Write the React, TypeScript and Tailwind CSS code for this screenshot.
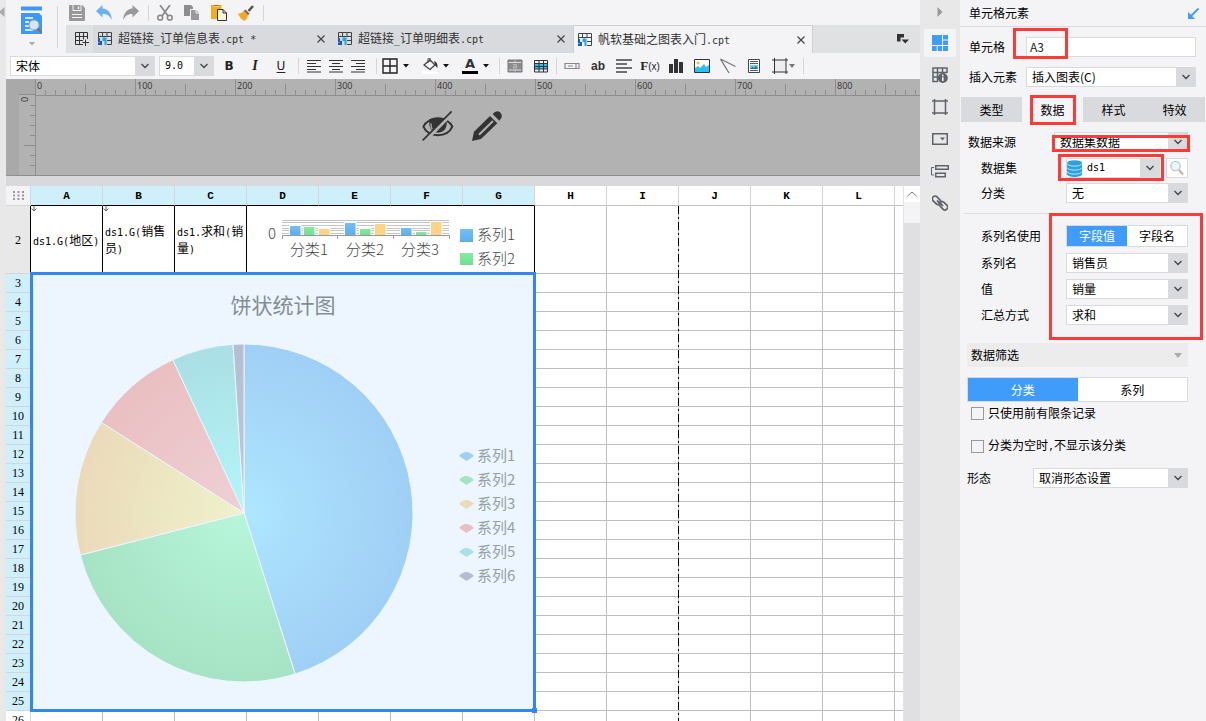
import { Fragment, type ReactNode } from "react";

const COLUMNS = ["A", "B", "C", "D", "E", "F", "G", "H", "I", "J", "K", "L", ""];
const SELECTED_COLUMNS = 7;
const FIRST_ROW = 3;
const LAST_SELECTED_ROW = 25;
const ROWS = Array.from({ length: 24 }, (_, i) => FIRST_ROW + i);

const ascii = "text-[10px] font-['DejaVu_Sans_Mono',monospace]";

/* Latin runs are set in a half-width face so that they line up with the ideographs. */
function Mixed({ text }: { text: string }) {
  return (
    <>
      {text.split(/([\x20-\x7e]+)/).map((run, i) =>
        i % 2 ? (
          <span key={i} className="font-['DejaVu_Sans_Mono',monospace] text-[10px]">
            {run}
          </span>
        ) : (
          <Fragment key={i}>{run}</Fragment>
        ),
      )}
    </>
  );
}

function Icon({ children, box = "0 0 16 16", className = "size-4" }: { children: ReactNode; box?: string; className?: string }) {
  return (
    <svg viewBox={box} className={`block shrink-0 ${className}`} fill="none" aria-hidden="true">
      {children}
    </svg>
  );
}

function Chevron({ className = "w-[19px]" }: { className?: string }) {
  return (
    <span className={`pointer-events-none absolute inset-y-0 right-0 flex items-center justify-center bg-[#d9dadd] ${className}`}>
      <Icon box="0 0 8 6" className="h-[6px] w-2">
        <path d="M0.5 1 L4 4.5 L7.5 1" stroke="#444" strokeWidth="1.3" />
      </Icon>
    </span>
  );
}

function Select({ id, label, value, className = "", mono = false, icon }: { id: string; label?: string; value: string; className?: string; mono?: boolean; icon?: ReactNode }) {
  return (
    <div className={`relative flex h-5 items-center border border-[#d9dadd] bg-white ${className}`}>
      {icon}
      <select id={id} aria-label={label} className={`h-full w-full appearance-none bg-transparent pl-[5px] text-black outline-none ${mono ? ascii : ""}`}>
        <option>{value}</option>
      </select>
      <Chevron />
    </div>
  );
}

function Caret() {
  return (
    <Icon box="0 0 6 4" className="h-1 w-[6px]">
      <path d="M0 0 H6 L3 3.5 Z" fill="#111" />
    </Icon>
  );
}

function Divider({ className }: { className: string }) {
  return <span className={`w-px shrink-0 bg-[#d4d5d8] ${className}`} />;
}

function Tool({ label, width = "w-[26px]", children }: { label: string; width?: string; children: ReactNode }) {
  return (
    <button aria-label={label} className={`flex h-5 shrink-0 items-center justify-center ${width}`}>
      {children}
    </button>
  );
}

function DropTool({ label, children }: { label: string; children: ReactNode }) {
  return (
    <button aria-label={label} className="flex h-5 w-10 shrink-0 items-center pl-[5px]">
      {children}
      <span className="flex w-4 justify-center">
        <Caret />
      </span>
    </button>
  );
}

function QuickBar() {
  return (
    <div className="flex h-[25px] items-center pl-[3px]">
      <div className="flex gap-[11px]">
        <button aria-label="保存">
          <Icon>
            <path d="M0 1 Q0 0 1 0 H13 L16 3 V15 Q16 16 15 16 H1 Q0 16 0 15 Z" fill="#999" />
            <path d="M4 0 V5.500 H12 V0" stroke="#f4f4f7" />
            <path d="M9.500 1.500 V4" stroke="#f4f4f7" strokeWidth="1.500" />
            <path d="M3 9.500 H13 M3 12.500 H13" stroke="#f4f4f7" />
          </Icon>
        </button>
        <button aria-label="撤销">
          <Icon>
            <path d="M0 6 L6.500 0 V3.500 C12 4 15.500 8 15.800 15 C13.500 10.500 11 9 6.500 9 V12.500 Z" fill="#6cb0f2" />
          </Icon>
        </button>
        <button aria-label="重做">
          <Icon>
            <path d="M16 6 L9.500 0 V3.500 C4 4 0.500 8 0.200 15 C2.500 10.500 5 9 9.500 9 V12.500 Z" fill="#999" />
          </Icon>
        </button>
      </div>
      <Divider className="mr-2 ml-[9px] h-4" />
      <div className="flex gap-[11px]">
        <button aria-label="剪切">
          <Icon>
            <path d="M3 0 L11 11 M13 0 L5 11" stroke="#888" strokeWidth="1.700" />
            <circle cx="3.200" cy="12.700" r="2.400" stroke="#888" strokeWidth="1.500" />
            <circle cx="12.800" cy="12.700" r="2.400" stroke="#888" strokeWidth="1.500" />
          </Icon>
        </button>
        <button aria-label="复制">
          <Icon>
            <path d="M0 0 H7 L9 2 V11 H0 Z" fill="#8d8d8d" />
            <path d="M6.500 4.500 H12 L15.500 8 V15.500 H6.500 Z" fill="#999" stroke="#f4f4f7" />
            <path d="M12 4.500 V8 H15.500" stroke="#f4f4f7" />
          </Icon>
        </button>
        <button aria-label="粘贴">
          <Icon>
            <path d="M0 0 H3 V1.500 H8 V0 H10.500 V14 H0 Z" fill="#f6ab1c" />
            <path d="M3 0 H8 V1 H3 Z" fill="#b36b00" />
            <path d="M6.500 4.500 H12 L15.500 8 V15.500 H6.500 Z" fill="#fff6dc" stroke="#333" />
            <path d="M12 4.500 V8 H15.500" stroke="#333" />
          </Icon>
        </button>
        <button aria-label="格式刷">
          <Icon>
            <path d="M15 1 L10.500 6" stroke="#555" strokeWidth="2.600" />
            <path d="M7.500 4.500 L11.500 8.500 L10 10.500 L5.500 6 Z" fill="#8b6b55" />
            <path d="M0 8.500 Q3 9 5.500 6 L10 10.500 Q9 14 6.500 16 Q2 14 0 8.500 Z" fill="#f7a823" />
          </Icon>
        </button>
      </div>
      <Divider className="ml-[9px] h-4" />
    </div>
  );
}

function FileIcon() {
  return (
    <Icon box="0 0 14 14" className="size-[14px]">
      <path d="M0.500 4 V0.500 H13.500 V12.500 H9 M0.500 4.500 H13.500 M9 8.500 H13.500 M4.500 0.500 V5 M9 0.500 V5 M0.500 4 V6" stroke="#444" />
      <path d="M4.500 5.500 H8.500 V13 H6.500 V9 H4.500 Z" fill="#2aa3e0" />
      <path d="M0 6 H2 V9 H4 V13 H0 V11 H2 V10.500 H0 Z" fill="#0f5fb4" />
    </Icon>
  );
}

function FileTab({ name, active = false }: { name: string; active?: boolean }) {
  return (
    <div role="tab" aria-selected={active} className={`flex w-60 items-center ${active ? "border-x border-t border-[#cfd0d3] bg-[#f4f4f7] pr-[7px] pl-1" : "bg-[#d9dadd] pr-2 pl-[5px]"}`}>
      <FileIcon />
      <span className="ml-[6px] flex-1 whitespace-pre text-[#333]">
        <Mixed text={name} />
      </span>
      <button aria-label="关闭">
        <Icon box="0 0 8 8" className="size-2">
          <path d="M0.500 0.500 L7.500 7.500 M7.500 0.500 L0.500 7.500" stroke="#444" strokeWidth="1.200" />
        </Icon>
      </button>
    </div>
  );
}

function FileTabs() {
  return (
    <div role="tablist" className="flex h-7 bg-[#e0e1e3]">
      <button aria-label="新建" className="flex w-[27px] items-center justify-center pl-1">
        <Icon box="0 0 14 14" className="size-[14px]">
          <path d="M8 12.500 H0.500 V0.500 H12.500 V7 M0.500 4.500 H12.500 M0.500 8.500 H8 M4.500 0.500 V12.500 M8.500 0.500 V7.500 M10.500 7.500 V14 M7.500 10.500 H14" stroke="#333" />
        </Icon>
      </button>
      <FileTab name="超链接_订单信息表.cpt *" />
      <FileTab name="超链接_订单明细表.cpt" />
      <FileTab name="帆软基础之图表入门.cpt" active />
      <button aria-label="更多" className="mr-[11px] ml-auto">
        <Icon box="0 0 12 10" className="h-[10px] w-3">
          <path d="M0 0 H7 V3.500 H3.500 V7.500 H0 Z" fill="#333" />
          <path d="M4.500 5.500 H12 L8.250 9.500 Z" fill="#333" />
        </Icon>
      </button>
    </div>
  );
}

function FormatBar() {
  return (
    <div className="flex h-[26px] shrink-0 items-center overflow-hidden bg-[#f4f4f7] pl-1">
      <Select id="font" label="字体" value="宋体" className="w-[145px] shrink-0" />
      <Select id="size" label="字号" value="9.0" className="mr-[2px] ml-1 w-[55px] shrink-0" mono />
      <Tool label="加粗">
        <b className="font-['DejaVu_Sans'] text-xs text-[#222]">B</b>
      </Tool>
      <Tool label="斜体">
        <b className="font-['Liberation_Serif'] text-sm text-[#222] italic">I</b>
      </Tool>
      <Tool label="下划线">
        <span className="font-['DejaVu_Sans'] text-xs text-[#222] underline underline-offset-2">U</span>
      </Tool>
      <Divider className="mx-1 h-4" />
      <Tool label="左对齐" width="w-[22px]">
        <Icon>
          <path d="M1 2.500 H15 M1 5.500 H10 M1 8.500 H15 M1 11.500 H10 M1 14 H15" stroke="#333" strokeWidth="1.200" />
        </Icon>
      </Tool>
      <Tool label="居中" width="w-[22px]">
        <Icon>
          <path d="M1 2.500 H15 M4 5.500 H12 M1 8.500 H15 M4 11.500 H12 M1 14 H15" stroke="#333" strokeWidth="1.200" />
        </Icon>
      </Tool>
      <Tool label="右对齐" width="w-[22px]">
        <Icon>
          <path d="M1 2.500 H15 M6 5.500 H15 M1 8.500 H15 M6 11.500 H15 M1 14 H15" stroke="#333" strokeWidth="1.200" />
        </Icon>
      </Tool>
      <Divider className="ml-[7px] h-4" />
      <DropTool label="边框">
        <Icon>
          <path d="M1 1 H15 V15 H1 Z M8 1 V15 M1 8 H15" stroke="#222" strokeWidth="1.400" />
        </Icon>
      </DropTool>
      <DropTool label="填充">
        <Icon>
          <path d="M2 7 L8 2 L13 7 L8 11.500 Z" stroke="#444" strokeWidth="1.300" />
          <path d="M6 5 V1 Q6 0 7 0 H8 V4" stroke="#444" />
          <path d="M12 3 Q16 4 15.500 10 L13.500 8 Z" fill="#333" />
          <path d="M0 13 H16 V16 H0 Z" fill="#fff" />
        </Icon>
      </DropTool>
      <DropTool label="字体颜色">
        <span className="flex w-4 flex-col items-center">
          <b className="font-['DejaVu_Sans'] text-[13px] leading-3 text-[#333]">A</b>
          <span className="mt-px h-[3px] w-full bg-black" />
        </span>
      </DropTool>
      <Divider className="mx-[2px] h-4" />
      <Tool label="合并单元格">
        <Icon>
          <path d="M1 2 H15 V14 H1 Z" fill="#8c8c8c" />
          <path d="M1.500 4.500 H14.500 M1.500 12 H14.500 M8 2 V4 M8 12 V14" stroke="#ddd" />
          <path d="M1 2 H15 V14 H1 Z" stroke="#777" />
          <path d="M6 6.500 H9.500 V10 H6.500 V8.300 H9.500" stroke="#bbb" />
        </Icon>
      </Tool>
      <Tool label="拆分单元格">
        <Icon>
          <path d="M1 5 H15 V11 H1 Z" fill="#39bdf5" />
          <path d="M1.500 2.500 H14.500 V14 H1.500 Z M1 5.500 H15 M1 8.500 H15 M1 11 H15 M6 2 V14 M10.500 2 V14" stroke="#333" />
        </Icon>
      </Tool>
      <Divider className="mx-[2px] h-4" />
      <Tool label="控件">
        <Icon>
          <path d="M1 5.500 H15 V10.500 H1 Z M4 8 H9 M12 6 V10" stroke="#888" strokeWidth="1.200" />
        </Icon>
      </Tool>
      <Tool label="文本">
        <b className="font-['Liberation_Sans'] text-xs text-[#333]">ab</b>
      </Tool>
      <Tool label="富文本">
        <Icon>
          <path d="M0 2 H16 M0 6 H11 M0 10 H16 M0 14 H11" stroke="#444" strokeWidth="1.500" />
        </Icon>
      </Tool>
      <Tool label="公式">
        <b className="font-['Liberation_Serif'] text-[13px] text-[#222]">
          F<span className="font-['Liberation_Sans'] text-[10px] font-normal">(x)</span>
        </b>
      </Tool>
      <Tool label="图表">
        <Icon>
          <path d="M1 6 H5 V15 H1 Z M6 1 H10 V15 H6 Z M11 4 H15 V15 H11 Z" fill="#333" />
        </Icon>
      </Tool>
      <Tool label="图片">
        <Icon>
          <path d="M0.500 1.500 H15.500 V14.500 H0.500 Z" fill="#fff" stroke="#333" />
          <circle cx="4" cy="5" r="1.500" fill="#ffb636" />
          <path d="M1 14 V10 L4 8 L6 10 L10 6 L12 9 L15 7 V14 Z" fill="#33bdf2" />
        </Icon>
      </Tool>
      <Tool label="斜线">
        <Icon>
          <path d="M0.500 1 L15.500 8.500 M0.500 1 L9 15" stroke="#777" strokeWidth="1.300" />
        </Icon>
      </Tool>
      <Tool label="子报表">
        <Icon>
          <path d="M2.500 1.500 H13.500 V14.500 H2.500 Z" fill="#fff" stroke="#444" />
          <path d="M4 3.500 H12 M4 5.500 H12 M4 12.500 H12" stroke="#555" />
          <path d="M4 7 H12 V11 H4 Z" fill="#69c4f4" />
          <path d="M4 11 L6.500 9 L8 10 L10 8 L12 11 Z" fill="#1b6fb8" />
        </Icon>
      </Tool>
      <button aria-label="悬浮元素" className="flex h-5 shrink-0 items-center pl-[5px]">
        <Icon>
          <path d="M2 2 H14 V14 H2 Z" fill="#eee" />
          <path d="M2.500 0 V16 M14 0 V16 M0 2 H16 M0 14 H16" stroke="#333" />
        </Icon>
        <Icon box="0 0 6 4" className="ml-px h-1 w-[6px]">
          <path d="M0 0 H6 L3 4 Z" fill="#777" />
        </Icon>
      </button>
      <Divider className="mx-2 h-4" />
    </div>
  );
}

function Ribbon() {
  return (
    <header className="flex h-[53px] shrink-0 bg-[#f4f4f7]">
      <div className="flex w-[60px] shrink-0 items-start pt-[6px]">
        <button aria-label="预览" className="flex w-[51px] flex-col items-center">
          <Icon box="0 0 21 28" className="h-7 w-[21px]">
            <path d="M0 0.500 H21 V4.500 H0 Z M0 7 H18 L21 10 V28 H0 Z" fill="#3d98f8" />
            <path d="M4 12 H12 M4 16 H8 M4 20 H8 M4 24 H12" stroke="#fff" strokeWidth="1.500" />
            <circle cx="13" cy="19" r="5" fill="#d5e6f5" stroke="#9aa5b2" />
            <path d="M16.500 22.500 L20.500 26.500" stroke="#8b6f52" strokeWidth="2.200" />
          </Icon>
          <Icon box="0 0 6 4" className="mt-2 h-1 w-[6px]">
            <path d="M0 0 H6 L3 3.500 Z" fill="#aaa" />
          </Icon>
        </button>
        <Divider className="h-[42px]" />
      </div>
      <div className="min-w-0 flex-1">
        <QuickBar />
        <FileTabs />
      </div>
    </header>
  );
}

function Ruler() {
  return (
    <div className="relative flex h-[17px] overflow-hidden border-b border-[#8e8e8e]">
      <svg className="absolute inset-0 h-full w-full" aria-hidden="true">
        <defs>
          <pattern id="ticks" width="100" height="17" patternUnits="userSpaceOnUse">
            <path d="M0.500 0 V17 M50.500 5 V17 M10.500 11 V17 M20.500 11 V17 M30.500 11 V17 M40.500 11 V17 M60.500 11 V17 M70.500 11 V17 M80.500 11 V17 M90.500 11 V17" stroke="#8e8e8e" />
          </pattern>
        </defs>
        <rect width="100%" height="100%" fill="url(#ticks)" />
      </svg>
      {[0, 100, 200, 300, 400, 500, 600, 700, 800].map((n) => (
        <span key={n} className="w-[100px] shrink-0 pl-[2px] font-['Open_Sans',sans-serif] text-[9px] leading-[13px] font-medium text-[#333]">
          {n}
        </span>
      ))}
    </div>
  );
}

function PreviewPane() {
  return (
    <div className="flex h-[97px] shrink-0 border-b border-[#8e8e8e] bg-[#b2b2b2]">
      <div className="w-[13px] shrink-0 bg-[#a9a9a9]" />
      <div className="flex w-4 shrink-0 flex-col">
        <div className="h-4 border-b border-[#8e8e8e] bg-[#a9a9a9]" />
        <svg viewBox="0 0 16 80" className="h-20 w-4 overflow-visible" aria-hidden="true">
          <path d="M11 10.500 H16 M11 20.500 H16 M11 30.500 H16 M11 40.500 H16 M5 50.500 H16 M11 60.500 H16 M11 70.500 H16" stroke="#8e8e8e" />
          <text x="-7" y="9" transform="rotate(-90)" fontSize="9" fontWeight="500" fontFamily="Open Sans" fill="#333">
            0
          </text>
        </svg>
      </div>
      <div className="flex min-w-0 flex-1 flex-col">
        <Ruler />
        <div className="flex flex-1 items-start justify-center gap-4 border-l border-[#8e8e8e] pt-[14px] pr-8">
          <button aria-label="隐藏">
            <Icon box="34 42 100 96" className="h-8 w-[34px]">
              <path d="M40 92 C56 60 112 60 127 92 C112 126 56 126 40 92 Z" stroke="#333" strokeWidth="6" />
              <path d="M58 70 Q84 58 110 70 Q114 108 84 110 Q54 108 58 70 Z" fill="#333" />
              <path d="M63 82 Q62 94 67 100" stroke="#b2b2b2" strokeWidth="4" />
              <path d="M130 48 L45 135" stroke="#b2b2b2" strokeWidth="10" />
              <path d="M125 46 L38 133" stroke="#333" strokeWidth="5" />
            </Icon>
          </button>
          <button aria-label="编辑">
            <Icon box="186 42 96 96" className="size-8">
              <path d="M243 60 L265 82 L216 129 L189 135 L195 107 Z" fill="#333" />
              <path d="M251 54 Q262 40 273 49 Q285 60 271 74 Z" fill="#333" />
              <path d="M210 116 L252 75" stroke="#b2b2b2" strokeWidth="6" />
            </Icon>
          </button>
        </div>
      </div>
    </div>
  );
}

const BARS = [
  { x: 290, y: 225, fill: "url(#barBlue)" },
  { x: 304, y: 226, fill: "url(#barGreen)" },
  { x: 319, y: 228, fill: "#fdd485" },
  { x: 345, y: 222, fill: "url(#barBlue)" },
  { x: 360, y: 228, fill: "url(#barGreen)" },
  { x: 375, y: 223, fill: "#fdd485" },
  { x: 401, y: 227, fill: "url(#barBlue)" },
  { x: 416, y: 231, fill: "url(#barGreen)" },
  { x: 431, y: 221, fill: "#fdd485" },
];

function BarChart() {
  return (
    <svg viewBox="247 206 287 67" className="block h-[67px] w-[287px]" fontFamily="Noto Sans CJK SC, sans-serif" fontWeight="300" fontSize="15" fill="#444">
      <defs>
        <linearGradient id="barBlue" x2="0" y2="1">
          <stop stopColor="#6fc0fb" />
          <stop offset="1" stopColor="#5fadec" />
        </linearGradient>
        <linearGradient id="barGreen" x2="0" y2="1">
          <stop stopColor="#84eda0" />
          <stop offset="1" stopColor="#74dc92" />
        </linearGradient>
      </defs>
      <path d="M282 219.500 H449 M282 221.500 H449 M282 224.500 H449 M282 227.500 H449 M282 229.500 H449 M282 232.500 H449" fill="none" stroke="#c4c4c4" />
      {BARS.map((b) => (
        <rect key={b.x} x={b.x - 0.5} y={b.y - 0.5} width="11.500" height={235 - b.y} fill={b.fill} stroke="#fff" />
      ))}
      <path d="M282.500 238 V234.500 H449.500 V238 M337.500 234 V238 M393.500 234 V238" fill="none" stroke="#999" />
      <text x="268" y="238">0</text>
      <text x="309" y="254" textAnchor="middle">分类1</text>
      <text x="365" y="254" textAnchor="middle">分类2</text>
      <text x="420" y="254" textAnchor="middle">分类3</text>
      <rect x="460" y="228" width="13" height="13" fill="url(#barBlue)" />
      <text x="477" y="239">系列1</text>
      <rect x="460" y="252" width="13" height="12" fill="url(#barGreen)" />
      <text x="477" y="263">系列2</text>
    </svg>
  );
}

const SLICES = [
  { name: "系列1", from: 0, to: 162.4, edge: "#a0cff5", core: "#aee6ff" },
  { name: "系列2", from: 162.4, to: 255.6, edge: "#a6e3c5", core: "#b8f6da" },
  { name: "系列3", from: 255.6, to: 302.4, edge: "#ebdaba", core: "#eef2cc" },
  { name: "系列4", from: 302.4, to: 335.1, edge: "#eabfc1", core: "#eed0d6" },
  { name: "系列5", from: 335.1, to: 356.3, edge: "#aadfe4", core: "#b4f6fa" },
  { name: "系列6", from: 356.3, to: 360, edge: "#b5bdd3", core: "#bcc9e0" },
];

const CX = 244;
const CY = 513;
const R = 169;

function rim(angle: number) {
  const a = (angle * Math.PI) / 180;
  return `${(CX + R * Math.sin(a)).toFixed(2)} ${(CY - R * Math.cos(a)).toFixed(2)}`;
}

function PieChart() {
  return (
    <svg viewBox="31 274 504 437" className="block h-[437px] w-[504px]" fontFamily="Noto Sans CJK SC, sans-serif">
      <defs>
        {SLICES.map((s, i) => (
          <radialGradient key={s.name} id={`slice${i}`} gradientUnits="userSpaceOnUse" cx={CX} cy={CY} r={R}>
            <stop stopColor={s.core} />
            <stop offset="1" stopColor={s.edge} />
          </radialGradient>
        ))}
      </defs>
      <text x="283" y="313" textAnchor="middle" fontSize="21" fill="#858d95">
        饼状统计图
      </text>
      {SLICES.map((s, i) => (
        <path key={s.name} d={`M${CX} ${CY} L${rim(s.from)} A${R} ${R} 0 0 1 ${rim(s.to)} Z`} fill={`url(#slice${i})`} stroke="#edf6ff" />
      ))}
      {SLICES.map((s, i) => (
        <g key={s.name} transform={`translate(0 ${24 * i})`}>
          <path d="M459 456 Q466 448 474 456 L466.500 461 Z" fill={s.edge} />
          <text x="477" y="461" fontSize="15" fill="#979fa6">
            {s.name}
          </text>
        </g>
      ))}
    </svg>
  );
}

function ExpandMark() {
  return (
    <svg viewBox="0 0 6 6" className="absolute top-0 left-0 size-[6px]" fill="none" aria-hidden="true">
      <path d="M3 0 V5 M0.500 2.500 L3 5 L5.500 2.500" stroke="#666" />
    </svg>
  );
}

function Sheet() {
  return (
    <div className="relative min-w-0 flex-1 overflow-hidden bg-white">
      <table className="w-[961px] table-fixed border-separate border-spacing-0 leading-[15px] text-black">
        <colgroup>
          <col className="w-[25px]" />
          {COLUMNS.map((c) => (
            <col key={c} className="w-[72px]" />
          ))}
        </colgroup>
        <thead>
          <tr className="h-5">
            <th aria-label="全选" className="border-r border-b border-[#d4d5d8] bg-[#f4f4f7] p-0">
              <svg viewBox="0 0 11 9" className="mx-auto h-[9px] w-[11px]" aria-hidden="true">
                <path d="M0 0h2v2h-2zM4.500 0h2v2h-2zM9 0h2v2h-2zM0 3.500h2v2h-2zM4.500 3.500h2v2h-2zM9 3.500h2v2h-2zM0 7h2v2h-2zM4.500 7h2v2h-2zM9 7h2v2h-2z" fill="#999" />
              </svg>
            </th>
            {COLUMNS.map((c, i) => (
              <th
                key={c}
                scope="col"
                className={`border-r border-b border-r-[#d4d5d8] p-0 pt-[2px] font-['Liberation_Mono',monospace] text-[11px] font-bold ${i < SELECTED_COLUMNS ? "border-b-black bg-[#cfeffb]" : "border-b-[#c0c0c0] bg-white"}`}
              >
                {c}
              </th>
            ))}
          </tr>
        </thead>
        <tbody>
          <tr className="h-[68px]">
            <th scope="row" className="border-r border-b border-r-black border-b-[#d4d5d8] bg-[#e8e8e8] p-0 font-['Liberation_Serif',serif] text-xs font-normal">
              2
            </th>
            {["ds1.G(地区)", "ds1.G(销售员)", "ds1.求和(销量)"].map((t, i) => (
              <td key={t} className="relative border-r border-black p-0 pl-[2px] break-all">
                {i < 2 && <ExpandMark />}
                <Mixed text={t} />
              </td>
            ))}
            <td colSpan={4} className="border-r border-black p-0">
              <BarChart />
            </td>
            {COLUMNS.slice(SELECTED_COLUMNS).map((c) => (
              <td key={c} className="border-r border-b border-[#c0c0c0] p-0" />
            ))}
          </tr>
          {ROWS.map((r) => (
            <tr key={r} className="h-[19px]">
              <th
                scope="row"
                className={`border-r border-b border-[#d4d5d8] p-0 font-['Liberation_Serif',serif] text-xs font-normal ${r <= LAST_SELECTED_ROW ? "bg-[#cfeffb]" : "bg-white"}`}
              >
                {r}
              </th>
              {r === FIRST_ROW && (
                <td colSpan={7} rowSpan={23} className="relative bg-[#edf6ff] p-0">
                  <PieChart />
                  <span className="absolute -inset-x-px -top-[2px] -bottom-px border-[3px] border-[#3487f2]" />
                  <span className="absolute -right-[2px] -bottom-[2px] size-[5px] bg-[#3487f2]" />
                </td>
              )}
              {COLUMNS.slice(r > LAST_SELECTED_ROW ? 0 : SELECTED_COLUMNS).map((c) => (
                <td key={c} className="border-r border-b border-[#c0c0c0] p-0" />
              ))}
            </tr>
          ))}
        </tbody>
      </table>
      <svg className="absolute top-5 left-[672px] h-full w-px" aria-hidden="true">
        <path d="M0.500 0 V2000" stroke="#000" strokeDasharray="8 3 2 3" />
      </svg>
    </div>
  );
}

function ScrollBar() {
  return (
    <div className="flex w-[17px] shrink-0 flex-col border-l border-[#e2e3e5] bg-[#f4f4f7]">
      <button aria-label="向上滚动" className="flex h-4 items-center justify-center bg-white">
        <Icon box="0 0 10 6" className="h-[6px] w-[10px]">
          <path d="M0.500 5 L5 1 L9.500 5" stroke="#777" />
        </Icon>
      </button>
      <div className="mt-[21px] flex-1 bg-[#e0e0e2]" />
    </div>
  );
}

function SideRail() {
  return (
    <nav className="flex w-10 shrink-0 flex-col items-center bg-[#e8e8e8]">
      <button aria-label="收起" className="mb-[5px] flex h-6 items-center">
        <Icon box="0 0 6 10" className="h-[10px] w-[6px]">
          <path d="M0.500 0 L5.500 5 L0.500 10 Z" fill="#999" />
        </Icon>
      </button>
      <div className="flex flex-col gap-1">
        <button aria-label="单元格元素" className="flex h-7 w-8 items-center justify-center bg-[#f4f4f7]">
          <Icon>
            <path d="M0 0h10v10h-10zM11 0h5v4.500h-5zM11 5.500h5v4.500h-5zM0 11h4.700v5h-4.700zM5.700 11h4.300v5h-4.300zM11 11h5v5h-5z" fill="#3f9cfb" />
          </Icon>
        </button>
        <button aria-label="单元格属性" className="flex h-7 w-8 items-center justify-center">
          <Icon>
            <path d="M6 14.500 H1 V1 H15 V6 M1 5.500 H15 M1 10 H5.500 M5.500 1 V15 M10.500 1 V6" stroke="#5e636b" strokeWidth="1.500" />
            <circle cx="10.800" cy="11" r="5" fill="#5e636b" />
            <path d="M10.800 7.800 V9.200 M10.800 10.200 V14" stroke="#fff" strokeWidth="1.500" />
          </Icon>
        </button>
        <button aria-label="悬浮元素" className="flex h-7 w-8 items-center justify-center">
          <Icon>
            <path d="M2.500 0 V16 M13.500 0 V16 M0 2 H16 M0 14 H16" stroke="#5e636b" strokeWidth="1.500" />
          </Icon>
        </button>
        <button aria-label="控件设置" className="flex h-7 w-8 items-center justify-center">
          <Icon>
            <path d="M0.750 2.750 H15.250 V13.250 H0.750 Z" stroke="#5e636b" strokeWidth="1.500" />
            <path d="M8 6.500 H13 L10.500 9.500 Z" fill="#5e636b" />
          </Icon>
        </button>
        <button aria-label="条件属性" className="flex h-7 w-8 items-center justify-center">
          <Icon box="0 0 18 16" className="h-4 w-[18px]">
            <path d="M4.750 2.750 H17.250 V6.250 H4.750 Z M4.750 10.250 H14.250 V13.750 H4.750 Z" stroke="#5e636b" strokeWidth="1.500" />
            <path d="M3 4.500 H0.500 V12 H3" stroke="#5e636b" />
          </Icon>
        </button>
        <button aria-label="超级链接" className="flex h-7 w-8 items-center justify-center">
          <Icon>
            <g stroke="#5e636b" strokeWidth="1.700">
              <rect x="-0.200" y="2.500" width="9.500" height="5.500" rx="2.700" transform="rotate(45 4.500 5.250)" />
              <rect x="6.700" y="8" width="9.500" height="5.500" rx="2.700" transform="rotate(45 11.500 10.750)" />
              <path d="M5 5.500 L11 11" />
            </g>
          </Icon>
        </button>
      </div>
    </nav>
  );
}

function Field({ id, label, labelClass, children }: { id: string; label: string; labelClass: string; children: ReactNode }) {
  return (
    <div className="flex h-5 items-center">
      <label htmlFor={id} className={`shrink-0 whitespace-nowrap ${labelClass}`}>
        {label}
      </label>
      {children}
    </div>
  );
}

function Segmented({ left, right, className }: { left: string; right: string; className: string }) {
  return (
    <div className={`grid grid-cols-2 border border-[#d9dadd] bg-white ${className}`}>
      <button className="bg-[#3f9cfb] text-white">{left}</button>
      <button>{right}</button>
    </div>
  );
}

const redBox = "pointer-events-none absolute z-10 border-[3px] border-[#fb3a3a]";

function PropertyPanel() {
  return (
    <aside className="flex w-[246px] shrink-0 flex-col bg-[#f4f4f7] text-black">
      <div className="flex h-[27px] shrink-0 items-center justify-between border-b border-[#d9dadd] pr-[7px] pl-[9px]">
        <h2>单元格元素</h2>
        <Icon box="0 0 11 11" className="size-[11px]">
          <path d="M10.500 0.500 L3 8" stroke="#3f9cfb" strokeWidth="1.900" />
          <path d="M0 11 V4 L7 11 Z" fill="#3f9cfb" />
        </Icon>
      </div>

      <div className="mt-[10px] flex flex-col gap-[10px] pr-[10px] pl-[9px]">
        <Field id="cell" label="单元格" labelClass="w-[57px]">
          <div className="relative flex h-5 flex-1">
            <input id="cell" defaultValue="A3" className="w-full border border-[#d9dadd] bg-white px-[3px] text-[#222] outline-none" />
            <span className={`${redBox} -top-[9px] -left-[13px] h-[31px] w-[55px]`} />
          </div>
        </Field>
        <Field id="insert" label="插入元素" labelClass="w-[57px]">
          <Select id="insert" value="插入图表(C)" className="flex-1" />
        </Field>
      </div>

      <div role="tablist" className="mt-[10px] grid h-[25px] shrink-0 grid-cols-4 pr-px pl-px">
        <button role="tab" className="bg-[#d9dadd]">类型</button>
        <div className="relative flex">
          <button role="tab" aria-selected="true" className="flex-1">数据</button>
          <span className={`${redBox} -top-[2px] left-2 h-[30px] w-[46px]`} />
        </div>
        <button role="tab" className="bg-[#d9dadd]">样式</button>
        <button role="tab" className="bg-[#d9dadd]">特效</button>
      </div>

      <div className="mt-[10px] pr-[18px] pl-2">
        <Field id="source" label="数据来源" labelClass="w-[86px]">
          <div className="relative flex-1">
            <Select id="source" value="数据集数据" />
            <span className={`${redBox} top-[3px] -left-[2px] h-[17px] w-[138px]`} />
          </div>
        </Field>
      </div>

      <div className="mt-[6px] flex flex-col gap-[5px] pr-[18px] pl-[21px]">
        <Field id="dataset" label="数据集" labelClass="w-[85px]">
          <div className="relative flex-1">
            <Select
              id="dataset"
              value="ds1"
              mono
              icon={
                <Icon box="0 0 15 17" className="h-[17px] w-[15px]">
                  <path d="M0 3 V14 C0 18 15 18 15 14 V3 Z" fill="#27a3df" />
                  <ellipse cx="7.500" cy="3" rx="7.500" ry="2.700" fill="#27a3df" />
                  <path d="M0 3.500 C1 7 14 7 15 3.500 M0 7.500 C1 11 14 11 15 7.500 M0 11.500 C1 15 14 15 15 11.500" stroke="#fff" strokeWidth="0.700" />
                </Icon>
              }
            />
            <span className={`${redBox} -top-1 -left-2 h-[27px] w-[106px]`} />
          </div>
          <button aria-label="查看" className="ml-[6px] flex h-5 w-[22px] items-center justify-center border border-[#d9dadd] bg-white">
            <Icon>
              <circle cx="6.500" cy="6" r="4.700" fill="#eaf6fd" stroke="#b9c6d2" strokeWidth="1.300" />
              <path d="M10 10 L14 14.500" stroke="#c3b0a0" strokeWidth="2" />
            </Icon>
          </button>
        </Field>
        <Field id="category" label="分类" labelClass="w-[85px]">
          <Select id="category" value="无" className="flex-1" />
        </Field>
      </div>

      <hr className="mt-[10px] mr-4 ml-1 border-[#dededc]" />

      <div className="relative flex flex-col gap-[6px] pt-[11px] pr-[18px] pl-[21px]">
        <div className="flex items-center">
          <span className="w-[85px] shrink-0">系列名使用</span>
          <Segmented left="字段值" right="字段名" className="h-[22px] flex-1" />
        </div>
        <Field id="seriesName" label="系列名" labelClass="w-[85px]">
          <Select id="seriesName" value="销售员" className="flex-1" />
        </Field>
        <Field id="value" label="值" labelClass="w-[85px]">
          <Select id="value" value="销量" className="flex-1" />
        </Field>
        <Field id="summary" label="汇总方式" labelClass="w-[85px]">
          <Select id="summary" value="求和" className="flex-1" />
        </Field>
        <span className={`${redBox} -top-px right-[3px] h-[127px] w-[154px]`} />
      </div>

      <div className="mt-[18px] flex flex-col pr-[18px] pl-[7px]">
        <button className="flex h-6 items-center justify-between bg-[#ececec] pr-[6px] pl-1">
          数据筛选
          <Icon box="0 0 8 5" className="h-[5px] w-2">
            <path d="M0 0 H8 L4 5 Z" fill="#aaa" />
          </Icon>
        </button>
        <Segmented left="分类" right="系列" className="mt-[10px] h-[25px]" />
        <label className="mt-[3px] flex items-center gap-1 pl-1">
          <input type="checkbox" className="size-[13px] appearance-none border border-[#999]" />
          只使用前有限条记录
        </label>
        <label className="mt-4 flex items-center gap-1 pl-1">
          <input type="checkbox" className="size-[13px] appearance-none border border-[#999]" />
          <span>
            分类为空时<Mixed text="," />不显示该分类
          </span>
        </label>
        <div className="mt-[13px] flex h-5 items-center">
          <label htmlFor="shape" className="w-[66px] shrink-0">形态</label>
          <Select id="shape" value="取消形态设置" className="flex-1" />
        </div>
      </div>
    </aside>
  );
}

export default function App() {
  return (
    <div className="flex h-screen overflow-hidden bg-[#e8e8e8] font-['Noto_Sans_CJK_SC',sans-serif] text-xs leading-4">
      <div className="relative w-[6px] shrink-0">
        <svg viewBox="0 0 5 10" className="absolute top-[7px] left-0 h-[10px] w-[5px]" aria-hidden="true">
          <path d="M4.500 0 V10 L0 6 V4 Z" fill="#aaa" />
        </svg>
      </div>
      <main className="flex min-w-0 flex-1 flex-col bg-[#d9d9db]">
        <Ribbon />
        <FormatBar />
        <PreviewPane />
        <div className="mt-[10px] flex min-h-0 flex-1">
          <Sheet />
          <ScrollBar />
        </div>
      </main>
      <SideRail />
      <PropertyPanel />
    </div>
  );
}
